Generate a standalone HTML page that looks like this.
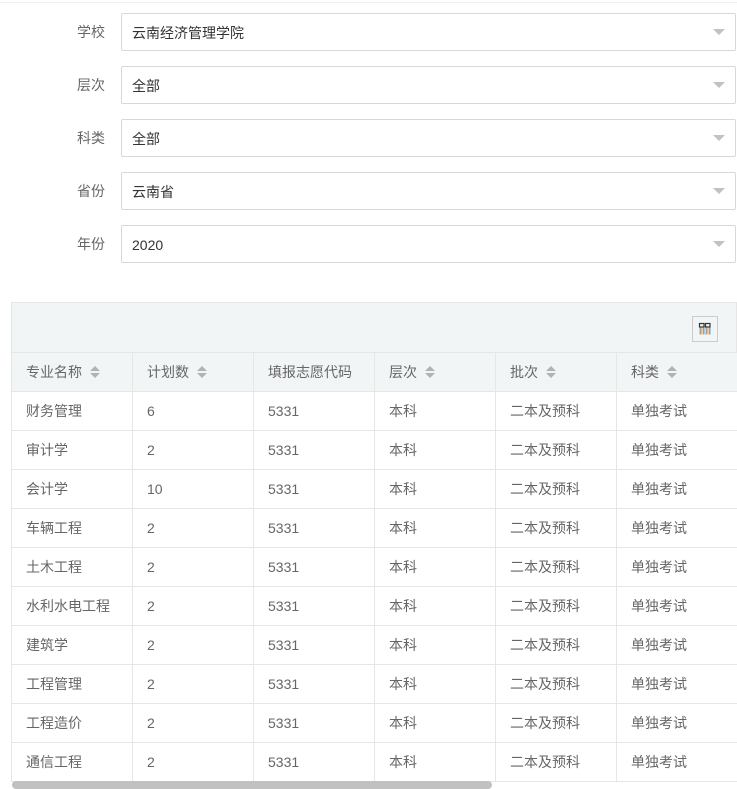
<!DOCTYPE html>
<html><head><style>
body{margin:0;width:737px;height:788px;overflow:hidden;background:#fff;font-family:"Liberation Sans","Noto Sans CJK SC",sans-serif;font-size:14px;color:#666}
.top{position:absolute;left:0;top:0;width:737px;height:2px;border-bottom:1px solid #f0f0f0}
.f{position:absolute;left:0;width:737px;height:38px}
.f .l{position:absolute;right:632px;top:10px;color:#666;font-size:14px;line-height:18px}
.f .s{position:absolute;left:121px;top:0;width:613px;height:36px;border:1px solid #d8d8d8;border-radius:2px}
.f .s span{position:absolute;left:10px;top:10px;color:#333;line-height:18px}
.f .s i{position:absolute;right:10px;top:15px;border-left:6px solid transparent;border-right:6px solid transparent;border-top:6px solid #c2c2c2}
.tb{position:absolute;left:11px;top:302px;width:724px;height:50px;background:#f2f5f5;border:1px solid #e6e6e6;border-bottom:none}
.ic{position:absolute;left:680px;top:13px;width:26px;height:26px;border:1px solid #ccc;box-sizing:border-box}
table{position:absolute;left:11px;top:352px;border-collapse:collapse;table-layout:fixed;width:730px;font-size:14px}
td,th{height:38px;box-sizing:border-box;border:1px solid #e6e6e6;padding:0 14px;text-align:left;font-weight:normal;white-space:nowrap;overflow:hidden;line-height:18px;vertical-align:middle}
tr{height:39px}
th{background:#f2f5f5}
td{background:#fff}
.so{display:inline-block;vertical-align:middle;margin-left:8px;width:10px;height:12px;position:relative;top:-1px}
.so:before{content:"";position:absolute;left:0;top:0;border:5px solid transparent;border-top:none;border-bottom:5px solid #b2b2b2}
.so:after{content:"";position:absolute;left:0;top:7px;border:5px solid transparent;border-bottom:none;border-top:5px solid #b2b2b2}
.c1{box-shadow:1px 0 4px rgba(0,0,0,.08)}
.sb{position:absolute;left:12px;top:781px;width:480px;height:8px;background:#c1c1c1;border-radius:4px}
</style></head><body>
<div class="top"></div>
<div class="f" style="top:13px"><div class="l">学校</div><div class="s"><span>云南经济管理学院</span><i></i></div></div>
<div class="f" style="top:66px"><div class="l">层次</div><div class="s"><span>全部</span><i></i></div></div>
<div class="f" style="top:119px"><div class="l">科类</div><div class="s"><span>全部</span><i></i></div></div>
<div class="f" style="top:172px"><div class="l">省份</div><div class="s"><span>云南省</span><i></i></div></div>
<div class="f" style="top:225px"><div class="l">年份</div><div class="s"><span>2020</span><i></i></div></div>
<div class="tb"><div class="ic"><svg width="24" height="24" viewBox="0 0 24 24" style="position:absolute;left:0;top:0"><rect x="6.5" y="6.5" width="4.5" height="3.5" fill="none" stroke="#333" stroke-width="1.2"/><rect x="12.5" y="6.5" width="4.5" height="3.5" fill="none" stroke="#333" stroke-width="1.2"/><path d="M7 10.5v7M10 10.5v7M13 10.5v7M16 10.5v7" stroke="#f0a040" stroke-width="1"/><path d="M8 10.5v7M11 10.5v7M14 10.5v7M17 10.5v7" stroke="#5aa0e0" stroke-width="1"/></svg></div></div>
<table>
<colgroup><col style="width:121px"><col style="width:121px"><col style="width:121px"><col style="width:121px"><col style="width:121px"><col style="width:125px"></colgroup>
<tr><th class="c1">专业名称<span class="so"></span></th><th>计划数<span class="so"></span></th><th>填报志愿代码</th><th>层次<span class="so"></span></th><th>批次<span class="so"></span></th><th>科类<span class="so"></span></th></tr>
<tr><td class="c1">财务管理</td><td>6</td><td>5331</td><td>本科</td><td>二本及预科</td><td>单独考试</td></tr>
<tr><td class="c1">审计学</td><td>2</td><td>5331</td><td>本科</td><td>二本及预科</td><td>单独考试</td></tr>
<tr><td class="c1">会计学</td><td>10</td><td>5331</td><td>本科</td><td>二本及预科</td><td>单独考试</td></tr>
<tr><td class="c1">车辆工程</td><td>2</td><td>5331</td><td>本科</td><td>二本及预科</td><td>单独考试</td></tr>
<tr><td class="c1">土木工程</td><td>2</td><td>5331</td><td>本科</td><td>二本及预科</td><td>单独考试</td></tr>
<tr><td class="c1">水利水电工程</td><td>2</td><td>5331</td><td>本科</td><td>二本及预科</td><td>单独考试</td></tr>
<tr><td class="c1">建筑学</td><td>2</td><td>5331</td><td>本科</td><td>二本及预科</td><td>单独考试</td></tr>
<tr><td class="c1">工程管理</td><td>2</td><td>5331</td><td>本科</td><td>二本及预科</td><td>单独考试</td></tr>
<tr><td class="c1">工程造价</td><td>2</td><td>5331</td><td>本科</td><td>二本及预科</td><td>单独考试</td></tr>
<tr><td class="c1">通信工程</td><td>2</td><td>5331</td><td>本科</td><td>二本及预科</td><td>单独考试</td></tr>
</table>
<div class="sb"></div>
</body></html>
